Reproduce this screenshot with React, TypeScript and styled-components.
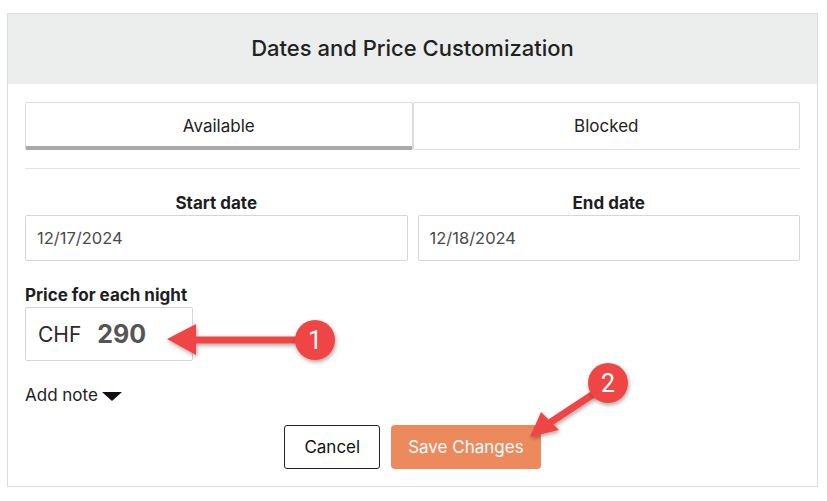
import React from 'react';
import styled, { createGlobalStyle } from 'styled-components';

const GlobalStyle = createGlobalStyle`
  html, body {
    margin: 0;
    padding: 0;
    background: #ffffff;
  }
  body {
    font-family: Inter, "Noto Sans", sans-serif;
    color: #222222;
  }
`;

const Page = styled.div`
  position: relative;
  width: 827px;
  height: 501px;
  padding: 13px 0 0 7px;
  box-sizing: border-box;
`;

const Card = styled.div`
  width: 811px;
  border: 1px solid #dcdcdc;
  box-sizing: border-box;
  background: #ffffff;
`;

const Header = styled.div`
  height: 70px;
  background: #eceeed;
  display: flex;
  align-items: center;
  justify-content: center;
  font-size: 22px;
  font-weight: 500;
  color: #222222;
  padding-bottom: 2px;
  box-sizing: border-box;
`;

const Body = styled.div`
  padding: 18px 17px 17px;
  display: flex;
  flex-direction: column;
`;

const Tabs = styled.div`
  display: grid;
  grid-template-columns: 1fr 1fr;
  height: 48px;
`;

const Tab = styled.div<{ active?: boolean }>`
  display: flex;
  align-items: center;
  justify-content: center;
  font-size: 17px;
  color: #222222;
  border: 1px solid #dcdcdc;
  border-radius: 2px;
  box-sizing: border-box;
  border-bottom: ${props => (props.active ? '4px solid #a9a9a9' : '1px solid #dcdcdc')};
  padding-top: ${props => (props.active ? '2px' : '0')};
`;

const Divider = styled.div`
  height: 1px;
  background: #e2e2e2;
  margin: 18px 0 24px;
`;

const DateRow = styled.div`
  display: grid;
  grid-template-columns: 1fr 1fr;
  gap: 10px;
`;

const Field = styled.div<{ centered?: boolean }>`
  display: flex;
  flex-direction: column;
  align-items: ${props => (props.centered ? 'stretch' : 'flex-start')};
`;

const Label = styled.div<{ centered?: boolean }>`
  font-size: 17px;
  font-weight: 700;
  color: #1e1e1e;
  text-align: ${props => (props.centered ? 'center' : 'left')};
  line-height: 20px;
  margin-bottom: 2px;
`;

const DateInput = styled.div`
  height: 46px;
  border: 1px solid #d6d6d6;
  border-radius: 2px;
  box-sizing: border-box;
  display: flex;
  align-items: center;
  padding-left: 11px;
  font-size: 16.5px;
  color: #4a4a4a;
`;

const PriceSection = styled.div`
  margin-top: 24px;
`;

const PriceBox = styled.div`
  width: 168px;
  height: 54px;
  border: 1px solid #d6d6d6;
  border-radius: 2px;
  box-sizing: border-box;
  display: flex;
  align-items: center;
  padding-left: 12px;
  gap: 16px;
`;

const Currency = styled.span`
  font-size: 21px;
  color: #2a2a2a;
`;

const Amount = styled.span`
  font-size: 25px;
  font-weight: 700;
  color: #555555;
`;

const NoteToggle = styled.div`
  margin-top: 24px;
  display: flex;
  align-items: center;
  gap: 4px;
  font-size: 17px;
  color: #222222;
  height: 20px;
`;

const Caret = styled.span`
  width: 0;
  height: 0;
  border-left: 10px solid transparent;
  border-right: 10px solid transparent;
  border-top: 9px solid #111111;
  margin-top: 2px;
`;

const Actions = styled.div`
  margin-top: 20px;
  display: flex;
  justify-content: center;
  gap: 11px;
`;

const Button = styled.button<{ primary?: boolean }>`
  height: 44px;
  padding: 0 ${props => (props.primary ? '17px' : '19px')};
  font-family: Inter, "Noto Sans", sans-serif;
  font-size: 17px;
  border-radius: ${props => (props.primary ? '4px' : '3px')};
  border: ${props => (props.primary ? 'none' : '1px solid #222222')};
  background: ${props => (props.primary ? '#ec8a5e' : '#ffffff')};
  color: ${props => (props.primary ? '#ffffff' : '#111111')};
  cursor: pointer;
`;

const Annotations = styled.svg`
  position: absolute;
  left: 0;
  top: 0;
  pointer-events: none;
`;

const Marker = ({ cx, cy, n }: { cx: number; cy: number; n: string }) => (
  <g>
    <circle cx={cx} cy={cy} r={20} fill="#f04545" filter="url(#shadow)" />
    <text
      x={cx}
      y={cy + 9}
      textAnchor="middle"
      fontFamily="Roboto, 'Liberation Sans', sans-serif"
      fontSize="25"
      fill="#ffffff"
    >
      {n}
    </text>
  </g>
);

export default function App() {
  return (
    <>
      <GlobalStyle />
      <Page>
        <Card>
          <Header>Dates and Price Customization</Header>
          <Body>
            <Tabs>
              <Tab active>Available</Tab>
              <Tab>Blocked</Tab>
            </Tabs>
            <Divider />
            <DateRow>
              <Field centered>
                <Label centered>Start date</Label>
                <DateInput>12/17/2024</DateInput>
              </Field>
              <Field centered>
                <Label centered>End date</Label>
                <DateInput>12/18/2024</DateInput>
              </Field>
            </DateRow>
            <PriceSection>
              <Field>
                <Label>Price for each night</Label>
                <PriceBox>
                  <Currency>CHF</Currency>
                  <Amount>290</Amount>
                </PriceBox>
              </Field>
            </PriceSection>
            <NoteToggle>
              Add note <Caret />
            </NoteToggle>
            <Actions>
              <Button>Cancel</Button>
              <Button primary>Save Changes</Button>
            </Actions>
          </Body>
        </Card>
        <Annotations width="827" height="501" viewBox="0 0 827 501">
          <defs>
            <filter id="shadow" x="-50%" y="-50%" width="200%" height="200%">
              <feDropShadow dx="1" dy="2" stdDeviation="2" floodColor="#000" floodOpacity="0.35" />
            </filter>
          </defs>
          <g filter="url(#shadow)">
            <line x1="300" y1="340" x2="190" y2="340" stroke="#f04545" strokeWidth="7" />
            <polygon points="167,339 196,324 196,355" fill="#f04545" />
          </g>
          <Marker cx={315} cy={340} n="1" />
          <g filter="url(#shadow)">
            <line x1="595" y1="393" x2="548" y2="424" stroke="#f04545" strokeWidth="7" />
            <polygon points="530,437 541,412 559,430" fill="#f04545" />
          </g>
          <Marker cx={608} cy={383} n="2" />
        </Annotations>
      </Page>
    </>
  );
}
